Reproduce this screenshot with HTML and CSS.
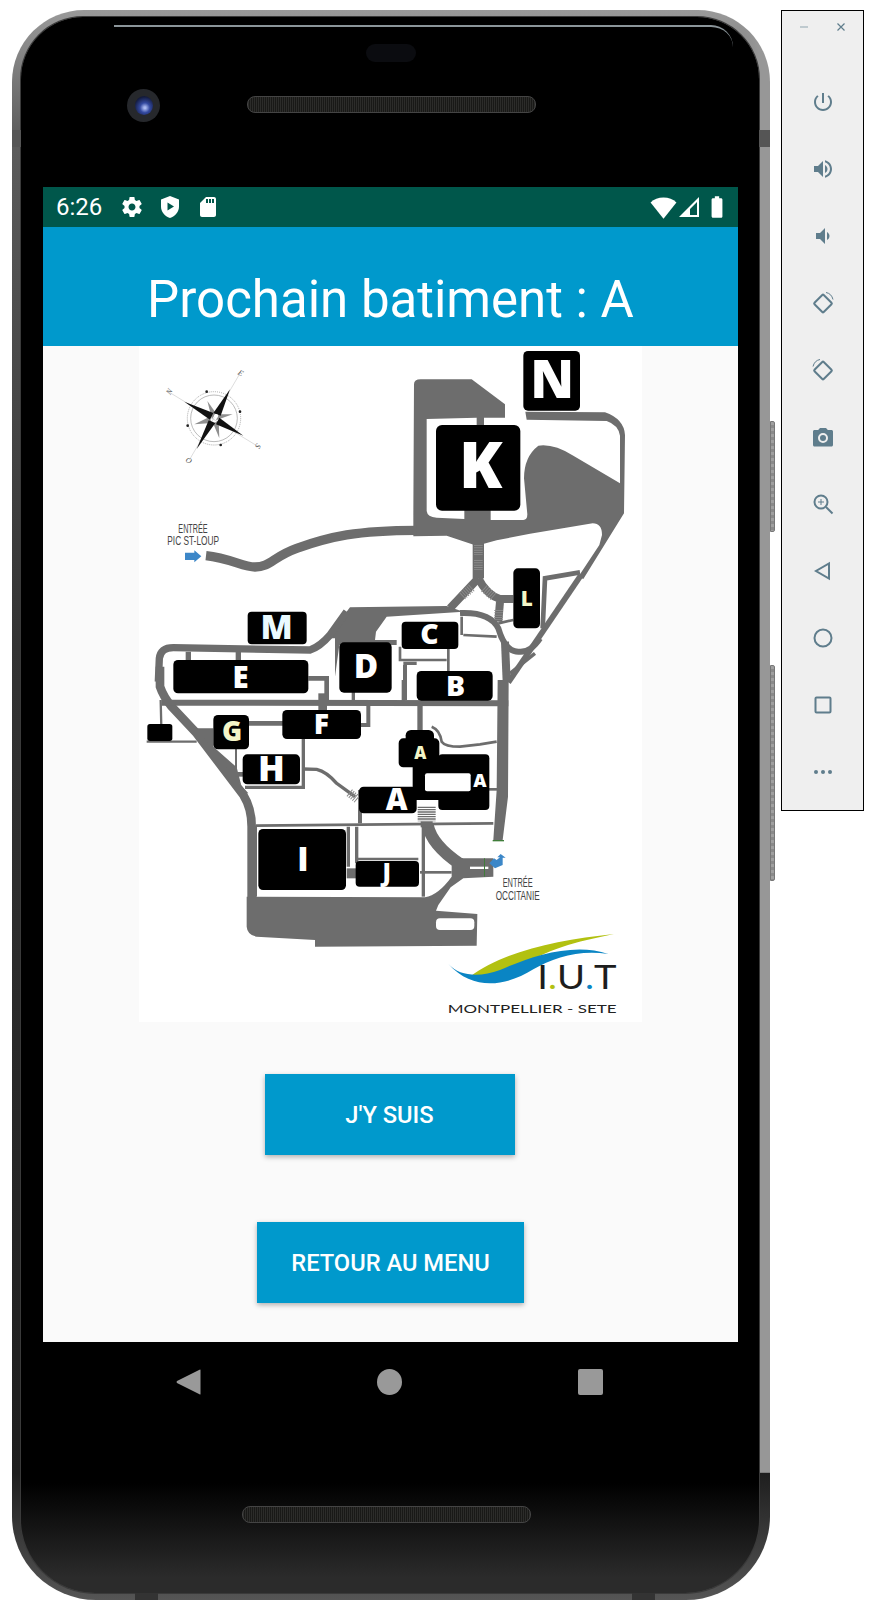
FILE: index.html
```html
<!DOCTYPE html>
<html lang="fr">
<head>
    <meta charset="UTF-8">
    <meta name="viewport" content="width=device-width, initial-scale=1.0">
    <title>Prochain batiment</title>
    <link rel="stylesheet" href="styles.css">
</head>
<body>

<div class="phone">
    <div class="glare"></div>
    <div class="side-btn side-btn-power"></div>
    <div class="side-btn side-btn-volume"></div>
    <div class="band band-left"></div>
    <div class="band band-right"></div>
    <div class="band band-bottom1"></div>
    <div class="band band-bottom2"></div>

    <div class="phone-top">
        <div class="earpiece"></div>
        <div class="top-row">
            <div class="camera"><div class="lens"></div></div>
            <div class="speaker"></div>
        </div>
    </div>

    <div class="screen">
        <div class="statusbar">
            <span class="clock">6:26</span>
            <svg class="st-icon" viewBox="0 0 24 24"><path d="M19.43 12.98c.04-.32.07-.64.07-.98s-.03-.66-.07-.98l2.11-1.65c.19-.15.24-.42.12-.64l-2-3.46c-.12-.22-.39-.3-.61-.22l-2.49 1c-.52-.4-1.08-.73-1.69-.98l-.38-2.65C14.46 2.18 14.25 2 14 2h-4c-.25 0-.46.18-.49.42l-.38 2.65c-.61.25-1.17.59-1.69.98l-2.49-1c-.23-.09-.49 0-.61.22l-2 3.46c-.13.22-.07.49.12.64l2.11 1.65c-.04.32-.07.65-.07.98s.03.66.07.98l-2.11 1.65c-.19.15-.24.42-.12.64l2 3.46c.12.22.39.3.61.22l2.49-1c.52.4 1.08.73 1.69.98l.38 2.65c.03.24.24.42.49.42h4c.25 0 .46-.18.49-.42l.38-2.65c.61-.25 1.17-.59 1.69-.98l2.49 1c.23.09.49 0 .61-.22l2-3.46c.12-.22.07-.49-.12-.64l-2.11-1.65zM12 15.5c-1.93 0-3.5-1.57-3.5-3.5s1.57-3.5 3.5-3.5 3.5 1.57 3.5 3.5-1.57 3.5-3.5 3.5z"/></svg>
            <svg class="st-icon" viewBox="0 0 24 24"><path fill-rule="evenodd" d="M12 1l9 3.500v7c0 5.200-3.700 9.600-9 11.500-5.300-1.900-9-6.300-9-11.500v-7zM9.500 7.500v8l6.500-4z"/></svg>
            <svg class="st-icon" viewBox="0 0 24 24"><path d="M18 2h-8L4.020 8 4 20c0 1.100.9 2 2 2h12c1.100 0 2-.9 2-2V4c0-1.100-.9-2-2-2zm-6 6h-2V4h2v4zm3 0h-2V4h2v4zm3 0h-2V4h2v4z"/></svg>
            <span class="st-gap"></span>
            <svg class="st-icon st-wifi" viewBox="0 0 24 24"><path d="M12 22L.5 7.500C3.500 4.500 7.500 3 12 3s8.500 1.500 11.500 4.500z"/></svg>
            <svg class="st-icon st-signal" viewBox="0 0 24 24"><path fill-rule="evenodd" d="M22 2v20H2zM20 7l-7 7v6h7z"/></svg>
            <svg class="st-icon st-battery" viewBox="0 0 24 24"><path d="M15.700 4H14V2h-4v2H8.300C7.600 4 7 4.600 7 5.300v15.300C7 21.400 7.600 22 8.300 22h7.300c.8 0 1.400-.6 1.400-1.300V5.300C17 4.600 16.400 4 15.700 4z"/></svg>
        </div>

        <div class="appbar">Prochain batiment : A</div>

        <div class="content">
            <svg class="plan" viewBox="27 3 1509 2028">
                <!-- haut du plan -->
                <g>
                    <!-- parking K + grosse zone droite -->
                    <path class="road-fill" d="M852,118 Q852,103 872,103 L1025,103 L1125,178 L1125,218 L1062,218 L1062,240 L1040,240 L1040,218 L890,222 L890,498 Q892,516 920,518 L1003,522 L1003,490 L1082,490 L1082,525 L1180,525 Q1192,525 1192,508 L1182,400 Q1182,335 1225,302 Q1270,295 1330,332 L1470,415 L1470,272 Q1465,240 1430,228 L1190,224 L1186,200 L1425,202 Q1482,222 1485,270 L1482,505 L1360,702 L1345,695 L1408,600 L1416,570 Q1416,535 1388,535 L1200,566 L1100,586 L1040,602 L950,572 L850,574 L850,510 Z"/>
                    <!-- route entree pic st-loup -->
                    <path class="road" stroke-width="28" d="M228,632 C300,640 340,666 375,666 C420,666 430,635 500,610 C600,575 680,556 860,556"/>
                    <!-- route en diagonale -->
                    <path class="road" stroke-width="17" d="M1352,692 L1135,1012"/>
                    <path class="road" stroke-width="14" d="M1238,850 L1245,700 L1350,682"/>
                    <!-- carrefour -->
                    <path class="road" stroke-width="34" d="M1045,590 L1045,700"/>
                    <path class="road" stroke-width="24" d="M1045,700 L960,790"/>
                    <path class="road" stroke-width="24" d="M1045,700 Q1070,750 1110,762 L1150,762"/>
                    <path class="road" stroke-width="24" d="M1110,770 L1105,830"/>
                    <!-- routes haut batiments -->
                    <path class="road-fill" d="M660,787 L950,783 L1000,800 L770,815 L738,860 L735,885 L800,885 L800,900 L628,900 L615,995 L615,880 L590,880 Z"/>
                    <path class="road" stroke-width="18" d="M990,804 Q1080,800 1105,850 Q1125,920 1165,920 Q1200,925 1230,880"/>
                    <path class="road" stroke-width="22" d="M85,1010 L88,940 Q92,908 130,908 L540,915 Q570,905 600,870 L650,800"/>
                    <path class="road" stroke-width="8" d="M1000,870 L1100,875"/>
                    <path class="road" stroke-width="8" d="M995,815 L995,870"/>
                    <path class="road" stroke-width="8" d="M810,905 L810,945 L950,945 M955,905 L955,990"/>
                    <path class="road" stroke-width="8" d="M1105,835 L1150,825"/>
                    <path class="road" stroke-width="24" d="M1125,890 L1130,1010"/>
                    <path class="road" stroke-width="10" d="M1140,985 L1215,925"/>
                    <path class="road" stroke-width="12" d="M825,960 L825,1065"/>
                    <path class="road" stroke-width="10" d="M820,955 L860,955"/>
                    <path class="road" stroke-width="14" d="M535,1000 L590,1000 L590,1065"/>
                    <path class="road" stroke-width="16" d="M175,920 L175,945 M325,920 L325,945"/>
                    <!-- passages pietons -->
                    <line class="stripes" x1="1045" y1="600" x2="1045" y2="630"/>
                    <line class="stripes" x1="1045" y1="645" x2="1045" y2="675"/>
                    <line class="stripes" x1="1025" y1="728" x2="995" y2="755"/>
                    <line class="stripes" x1="1062" y1="730" x2="1090" y2="755"/>
                    <line class="stripes" x1="1106" y1="795" x2="1106" y2="825"/>
                    <!-- batiments -->
                    <rect class="bldg" x="1180" y="18" width="170" height="179" rx="14"/>
                    <rect class="bldg" x="918" y="240" width="253" height="257" rx="18"/>
                    <rect class="bldg" x="1150" y="670" width="80" height="180" rx="14"/>
                    <rect class="bldg" x="353" y="800" width="177" height="98" rx="12"/>
                    <rect class="bldg" x="815" y="830" width="170" height="82" rx="12"/>
                    <text class="letter" x="1267" y="158" font-size="158" text-anchor="middle">N</text>
                    <text class="letter" x="1052" y="430" font-size="190" text-anchor="middle">K</text>
                    <text class="letter letter-yellow" x="1190" y="783" font-size="62" text-anchor="middle">L</text>
                    <text class="letter letter-blue" x="440" y="883" font-size="100" text-anchor="middle">M</text>
                    <text class="letter" x="898" y="897" font-size="85" text-anchor="middle">C</text>

                    <!-- boussole -->
                    <circle class="compass-ring" cx="252" cy="220" r="80"/>
                    <circle class="compass-ring2" cx="252" cy="220" r="70"/>
                    <line class="compass-line" x1="115" y1="140" x2="385" y2="305"/>
                    <line class="compass-line" x1="330" y1="85" x2="178" y2="345"/>
                    <polygon class="compass-soft" points="232,168 258,205 246,222"/>
                    <polygon class="compass-soft" points="308,208 266,208 258,226"/>
                    <polygon class="compass-soft" points="268,280 250,236 266,226"/>
                    <polygon class="compass-soft" points="193,238 238,216 246,234"/>
                    <polygon class="compass-dark" points="300,133 272,212 250,204"/>
                    <polygon class="compass-dark" points="340,272 268,218 258,238"/>
                    <polygon class="compass-dark" points="200,312 236,226 256,234"/>
                    <polygon class="compass-dark" points="163,170 250,204 240,224"/>
                    <circle class="compass-hub" cx="258" cy="213" r="6"/>
                    <circle class="compass-dot" cx="230" cy="140" r="4"/>
                    <circle class="compass-dot" cx="330" cy="200" r="4"/>
                    <circle class="compass-dot" cx="272" cy="300" r="4"/>
                    <circle class="compass-dot" cx="173" cy="242" r="4"/>
                    <text class="compass-letter" x="332" y="92" transform="rotate(30 332 84)" text-anchor="middle">E</text>
                    <text class="compass-letter" x="384" y="311" transform="rotate(120 384 303)" text-anchor="middle">S</text>
                    <text class="compass-letter" x="177" y="355" transform="rotate(210 177 347)" text-anchor="middle">O</text>
                    <text class="compass-letter" x="118" y="148" transform="rotate(-60 118 140)" text-anchor="middle">N</text>

                    <text class="entry-label" x="145" y="563" textLength="88" lengthAdjust="spacingAndGlyphs">ENTRÉE</text>
                    <text class="entry-label" x="112" y="601" textLength="155" lengthAdjust="spacingAndGlyphs">PIC ST-LOUP</text>
                    <path class="arrow-blue" d="M165,623 L193,623 L193,616 L214,634 L193,652 L193,645 L165,645 Z"/>
                </g>

                <!-- bas du plan, decale de la hauteur de coupe -->
                <g transform="translate(0 1005)">
                    <!-- parking du bas -->
                    <path class="road-fill" d="M350,650 L350,740 Q352,765 380,770 L555,780 L555,800 L1040,797 L1042,702 L918,692 L925,675 L962,622 L1000,595 L1090,590 L1090,535 L1062,535 L1000,535 L965,530 L965,590 Q925,645 885,652 L375,650 Z"/>
                    <path class="road" stroke-width="36" d="M893,435 Q905,495 990,552"/>
                    <rect class="hole" x="918" y="715" width="115" height="35" rx="12"/>
                    <path class="road" stroke-width="26" d="M90,-40 L90,20 Q100,50 125,80 L200,160 L340,345 Q365,385 365,440 L365,680"/>
                    <path class="road-fill" d="M200,145 L250,145 L250,200 L320,262 L340,340 L355,340 L310,290 Z"/>
                    <path class="road" stroke-width="18" d="M95,68 L1135,70"/>
                    <path class="road-fill" d="M1103,0 L1136,0 L1134,350 L1118,480 L1090,480 L1100,330 Z"/>
                    <path class="road" stroke-width="16" d="M870,70 L870,160"/>
                    <path class="road" stroke-width="12" d="M715,75 L715,135 L690,135"/>
                    <path class="road" stroke-width="10" d="M520,170 L520,322 L345,322"/>
                    <path class="road" stroke-width="14" d="M340,130 L460,130"/>
                    <path class="road" stroke-width="26" d="M578,40 L578,100"/>
                    <path class="road" stroke-width="10" d="M670,35 L670,65 M820,0 L820,65"/>
                    <path class="road" stroke-width="8" d="M905,140 Q930,150 935,185 Q945,200 990,200 L1050,193 L1100,185"/>
                    <path class="road" stroke-width="10" d="M520,267 L560,268 Q590,275 620,310 L675,350"/>
                    <path class="road" stroke-width="12" d="M690,330 L690,430"/>
                    <path class="road" stroke-width="8" d="M378,437 L1090,430"/>
                    <path class="road" stroke-width="10" d="M880,440 L880,650"/>
                    <path class="road" stroke-width="10" d="M680,440 L680,550 M655,440 L655,560"/>
                    <path class="road" stroke-width="7" d="M680,537 L865,537"/>
                    <path class="road" stroke-width="30" d="M650,580 L690,580"/>
                    <path class="road" stroke-width="8" d="M870,577 L965,577"/>
                    <path class="road" stroke-width="6" d="M378,437 L378,650"/>
                    <path class="road" stroke-width="8" d="M1075,328 L1105,328"/>
                    <path class="road" stroke-width="7" d="M92,60 L95,185 M50,185 L200,185"/>
                    <path class="road" stroke-width="6" d="M318,205 L318,265"/>
                    <path class="road" stroke-width="14" d="M315,283 L345,283"/>
                    <line class="stripes-wide" x1="890" y1="380" x2="890" y2="424"/>
                    <path class="road" stroke-width="36" d="M890,424 L890,442"/>
                    <line class="stripes" x1="658" y1="338" x2="682" y2="358"/>
                    <!-- entree occitanie -->
                    <rect class="hole" x="1020" y="560" width="55" height="7"/>
                    <rect class="mark-green" x="1088" y="480" width="34" height="4"/>
                    <rect class="mark-green" x="1062" y="535" width="3" height="55"/>
                    <path class="arrow-blue" d="M1078,550 L1092,535 L1100,540 L1110,532 L1102,532 L1112,522 L1127,533 L1118,533 L1118,555 L1095,565 Z"/>
                    <text class="entry-label" x="1118" y="622" textLength="90" lengthAdjust="spacingAndGlyphs">ENTRÉE</text>
                    <text class="entry-label" x="1097" y="660" textLength="132" lengthAdjust="spacingAndGlyphs">OCCITANIE</text>

                    <!-- batiments -->
                    <rect class="bldg" x="130" y="-60" width="405" height="100" rx="14"/>
                    <rect class="bldg" x="628" y="-113" width="157" height="151" rx="14"/>
                    <rect class="bldg" x="860" y="-27" width="228" height="89" rx="14"/>
                    <rect class="bldg" x="457" y="90" width="236" height="87" rx="14"/>
                    <rect class="bldg" x="250" y="105" width="107" height="103" rx="14"/>
                    <rect class="bldg" x="338" y="223" width="172" height="90" rx="14"/>
                    <rect class="bldg" x="52" y="132" width="75" height="51" rx="8"/>
                    <rect class="bldg" x="385" y="447" width="263" height="183" rx="14"/>
                    <rect class="bldg" x="677" y="543" width="190" height="77" rx="12"/>
                    <rect class="bldg" x="827" y="150" width="85" height="60" rx="16"/>
                    <rect class="bldg" x="806" y="175" width="122" height="87" rx="14"/>
                    <rect class="bldg" x="925" y="223" width="153" height="167" rx="12"/>
                    <rect class="bldg" x="848" y="240" width="90" height="120"/>
                    <rect class="bldg" x="687" y="320" width="173" height="80" rx="14"/>
                    <rect class="hole" x="885" y="280" width="137" height="54" rx="6"/>

                    <text class="letter" x="332" y="25" font-size="88" text-anchor="middle">E</text>
                    <text class="letter" x="708" y="-5" font-size="100" text-anchor="middle">D</text>
                    <text class="letter" x="977" y="49" font-size="85" text-anchor="middle">B</text>
                    <text class="letter" x="574" y="162" font-size="85" text-anchor="middle">F</text>
                    <text class="letter letter-yellow" x="306" y="183" font-size="82" text-anchor="middle">G</text>
                    <text class="letter" x="424" y="303" font-size="105" text-anchor="middle">H</text>
                    <text class="letter letter-yellow" x="871" y="238" font-size="50" text-anchor="middle">A</text>
                    <text class="letter" x="1050" y="320" font-size="55" text-anchor="middle">A</text>
                    <text class="letter" x="800" y="390" font-size="90" text-anchor="middle">A</text>
                    <text class="letter" x="519" y="574" font-size="98" text-anchor="middle">I</text>
                    <text class="letter" x="770" y="604" font-size="72" text-anchor="middle">J</text>

                    <!-- logo iut -->
                    <path class="logo-green" d="M1020,890 C1120,815 1280,780 1452,762 C1340,785 1240,810 1180,860 C1120,880 1060,885 1020,890 Z"/>
                    <path class="logo-blue" d="M955,852 C990,890 1050,892 1110,870 C1200,830 1330,785 1435,822 C1350,808 1270,832 1210,868 C1130,918 1030,935 955,852 Z"/>
                    <text class="logo-iut" x="1222" y="927" textLength="238" lengthAdjust="spacingAndGlyphs">I<tspan class="dot-green">.</tspan>U<tspan class="dot-blue">.</tspan>T</text>
                    <text class="logo-sub" x="953" y="998" textLength="507" lengthAdjust="spacingAndGlyphs">MONTPELLIER - SETE</text>
                </g>
            </svg>

            <button class="btn btn-here">J'y suis</button>
            <button class="btn btn-menu">Retour au menu</button>
        </div>
    </div>

    <div class="navbar">
        <svg class="nav-icon" viewBox="0 0 25 26"><path d="M24.500 1v24q0 1-1 .3L1 14q-1-1 0-2L23.500.7q1-.7 1 .3z"/></svg>
        <svg class="nav-icon" viewBox="0 0 25 26"><ellipse cx="12.500" cy="13" rx="12.500" ry="13"/></svg>
        <svg class="nav-icon" viewBox="0 0 25 26"><rect width="25" height="26" rx="2"/></svg>
    </div>

    <div class="phone-bottom"><div class="speaker speaker-low"></div></div>
</div>

<div class="panel">
    <div class="panel-head">
        <svg class="head-icon head-min" viewBox="0 0 10 10"><path d="M1 5h8"/></svg>
        <svg class="head-icon" viewBox="0 0 10 10"><path d="M1.500 1.500l7 7M8.500 1.500l-7 7"/></svg>
    </div>
    <div class="tool"><svg viewBox="0 0 24 24"><path d="M13 3h-2v10h2V3zm4.830 2.170l-1.420 1.420C17.990 7.860 19 9.810 19 12c0 3.870-3.130 7-7 7s-7-3.130-7-7c0-2.190 1.010-4.140 2.580-5.420L6.170 5.170C4.230 6.820 3 9.260 3 12c0 4.970 4.030 9 9 9s9-4.030 9-9c0-2.740-1.230-5.180-3.170-6.830z"/></svg></div>
    <div class="tool"><svg viewBox="0 0 24 24"><path d="M3 9v6h4l5 5V4L7 9H3zm13.500 3c0-1.770-1.020-3.290-2.500-4.030v8.050c1.480-.73 2.500-2.250 2.500-4.020zM14 3.230v2.060c2.890.86 5 3.540 5 6.710s-2.110 5.850-5 6.710v2.060c4.010-.91 7-4.490 7-8.770s-2.990-7.860-7-8.770z"/></svg></div>
    <div class="tool"><svg viewBox="0 0 24 24"><path d="M18.500 12c0-1.770-1.020-3.290-2.500-4.030v8.050c1.480-.73 2.500-2.250 2.500-4.020zM5 9v6h4l5 5V4L9 9H5z"/></svg></div>
    <div class="tool"><svg class="line-icon" viewBox="0 0 24 24"><rect x="5.500" y="6" width="13" height="13" rx="1" transform="rotate(45 12 12.500)"/><path class="thin" d="M15 1.500q5.500 1 7 7"/></svg></div>
    <div class="tool"><svg class="line-icon" viewBox="0 0 24 24"><rect x="5.500" y="6" width="13" height="13" rx="1" transform="rotate(-45 12 12.500)"/><path class="thin" d="M9 1.500q-5.500 1-7 7"/></svg></div>
    <div class="tool"><svg viewBox="0 0 24 24"><path fill-rule="evenodd" d="M9 3L7.170 5H3.500C2.700 5 2 5.700 2 6.500V20c0 .8.7 1.500 1.500 1.500h17c.8 0 1.500-.7 1.500-1.500V6.500C22 5.700 21.300 5 20.500 5h-3.670L15 3H9zm3 15a5 5 0 1 1 0-10 5 5 0 0 1 0 10z"/><circle cx="12" cy="13" r="3"/></svg></div>
    <div class="tool"><svg class="line-icon" viewBox="0 0 24 24"><circle cx="10" cy="10" r="6.500"/><path d="M15 15l6.500 6.500"/><path class="thin" d="M10 7v6M7 10h6"/></svg></div>
    <div class="tool"><svg class="line-icon" viewBox="0 0 24 24"><path d="M18 4.500v15L5 12z"/></svg></div>
    <div class="tool"><svg class="line-icon" viewBox="0 0 24 24"><circle cx="12" cy="12" r="8.500"/></svg></div>
    <div class="tool"><svg class="line-icon" viewBox="0 0 24 24"><rect x="4.500" y="4.500" width="15" height="15" rx="1"/></svg></div>
    <div class="tool"><svg viewBox="0 0 24 24"><circle cx="5" cy="12" r="2"/><circle cx="12" cy="12" r="2"/><circle cx="19" cy="12" r="2"/></svg></div>
</div>

</body>
</html>
```

FILE: styles.css
```css
html, body {
    margin: 0;
    padding: 0;
    background: #fff;
}
body {
    display: flex;
    align-items: flex-start;
    width: 873px;
    height: 1611px;
    padding: 10px 0 0 12px;
    box-sizing: border-box;
    overflow: hidden;
    font-family: Roboto, "Liberation Sans", sans-serif;
}

/* telephone */
.phone {
    position: relative;
    isolation: isolate;
    width: 758px;
    height: 1590px;
    padding: 0 32px 0 31px;
    box-sizing: border-box;
    background:
        linear-gradient(90deg, rgba(150, 150, 150, 0) 96%, #979797 98.500%) 0 0 / 100% 92% no-repeat,
        linear-gradient(#9a9a9a, #5c5c5c 8%, #333 40%, #1e1e1e 92%, #555 100%);
    border-radius: 72px 72px 84px 84px;
    flex-shrink: 0;
}
.phone::before {
    content: "";
    position: absolute;
    z-index: -1;
    top: 7px;
    left: 9px;
    right: 11px;
    bottom: 7px;
    border-radius: 62px 62px 74px 74px;
    background: linear-gradient(#000 93%, #2b2b2b 99%);
    box-shadow: 0 0 0 1px #3a3a3a;
}
.glare {
    position: absolute;
    top: 15px;
    left: 102px;
    right: 37px;
    height: 20px;
    border-top: 2px solid #8b959a;
    border-top-right-radius: 36px;
}
.side-btn {
    position: absolute;
    left: 758px;
    width: 5px;
    background: repeating-linear-gradient(#a0a0a0 0 3px, #8a8a8a 3px 6px);
    border: 1px solid #777;
    box-sizing: border-box;
    border-radius: 0 2px 2px 0;
}
.side-btn-power {
    top: 411px;
    height: 111px;
}
.side-btn-volume {
    top: 655px;
    height: 216px;
}
.band {
    position: absolute;
    background: #555;
}
.band-left {
    top: 120px;
    left: 0;
    width: 9px;
    height: 17px;
}
.band-right {
    top: 120px;
    right: 0;
    width: 11px;
    height: 17px;
}
.band-bottom1 {
    bottom: 0;
    left: 123px;
    width: 23px;
    height: 7px;
    background: #333;
}
.band-bottom2 {
    bottom: 0;
    left: 620px;
    width: 23px;
    height: 7px;
    background: #333;
}
.phone-top {
    display: flex;
    flex-direction: column;
    align-items: center;
    height: 177px;
    box-sizing: border-box;
    padding-top: 34px;
}
.earpiece {
    width: 50px;
    height: 18px;
    background: #0b0c10;
    border-radius: 9px;
}
.top-row {
    display: flex;
    align-items: center;
    width: 100%;
    margin-top: 24px;
    padding-left: 84px;
    box-sizing: border-box;
}
.camera {
    display: flex;
    align-items: center;
    justify-content: center;
    width: 33px;
    height: 33px;
    margin-top: 3px;
    background: #26282c;
    border-radius: 50%;
    margin-right: 87px;
}
.lens {
    width: 18px;
    height: 19px;
    border-radius: 50%;
    background: radial-gradient(circle at 55% 62%, #a9b8f0 6%, #3349a0 32%, #141c40 70%, #090b18);
}
.speaker {
    width: 289px;
    height: 17px;
    background: repeating-linear-gradient(90deg, #2c2c2a 0 1px, #191917 1px 2px);
    border: 1px solid #444;
    border-radius: 8px;
    box-sizing: border-box;
}
.screen {
    display: flex;
    flex-direction: column;
    height: 1155px;
}
.statusbar {
    display: flex;
    align-items: center;
    height: 40px;
    flex-shrink: 0;
    padding: 0 8px 0 13px;
    box-sizing: border-box;
    background: #00574b;
    color: #fff;
}
.clock {
    font-size: 24px;
    width: 64px;
}
.st-icon {
    width: 24px;
    height: 24px;
    margin-right: 14px;
    fill: #fff;
}
.st-gap {
    flex: 1;
}
.st-wifi {
    width: 27px;
    height: 27px;
    margin-right: 0;
}
.st-signal {
    margin-right: 3px;
}
.st-battery {
    width: 26px;
    height: 26px;
    margin-right: 0;
}
.appbar {
    display: flex;
    align-items: center;
    justify-content: center;
    height: 119px;
    padding-top: 26px;
    box-sizing: border-box;
    flex-shrink: 0;
    background: #0099cc;
    color: #fff;
    font-size: 51px;
}
.content {
    display: flex;
    flex-direction: column;
    align-items: center;
    flex: 1;
    background: #fafafa;
}
.plan {
    display: block;
    width: 503px;
    height: 676px;
    overflow: visible;
    background: #fff;
    flex-shrink: 0;
}
.btn {
    border: none;
    padding: 0;
    background: #0099cc;
    color: #fff;
    font-family: Roboto, "Liberation Sans", sans-serif;
    font-weight: 500;
    font-size: 23.700px;
    text-transform: uppercase;
    height: 81px;
    box-shadow: 0 2px 5px rgba(0, 0, 0, 0.3);
}
.btn-here {
    width: 250px;
    margin: 52px 2px 0 0;
}
.btn-menu {
    width: 267px;
    margin-top: 67px;
}
.navbar {
    display: flex;
    justify-content: space-between;
    padding: 27px 135px 0 133px;
}
.nav-icon {
    width: 25px;
    height: 26px;
    fill: #999;
}
.phone-bottom {
    display: flex;
    justify-content: center;
    padding-top: 111px;
    margin-left: -8px;
}

/* plan */
.road {
    fill: none;
    stroke: #6d6d6d;
}
.road-fill {
    fill: #6d6d6d;
}
.hole {
    fill: #fff;
}
.bldg {
    fill: #000;
}
.stripes {
    stroke: #8a8a8a;
    stroke-width: 26;
    stroke-dasharray: 3 4;
}
.stripes-wide {
    stroke: #6d6d6d;
    stroke-width: 54;
    stroke-dasharray: 4 3;
}
.letter {
    fill: #fff;
    font-family: "Open Sans", sans-serif;
    font-weight: 800;
}
.letter-yellow {
    fill: #f4f6c8;
}
.letter-blue {
    fill: #eafaff;
}
.compass-ring {
    fill: none;
    stroke: #aaa;
    stroke-width: 3;
    stroke-dasharray: 3 3;
}
.compass-ring2 {
    fill: none;
    stroke: #999;
    stroke-width: 2;
}
.compass-line {
    stroke: #bbb;
    stroke-width: 1.500;
}
.compass-soft {
    fill: #8f8f8f;
}
.compass-dark {
    fill: #111;
}
.compass-hub {
    fill: #fff;
}
.compass-dot {
    fill: #222;
}
.compass-letter {
    fill: #555;
    font-family: "Liberation Serif", serif;
    font-size: 24px;
    font-style: italic;
}
.entry-label {
    fill: #444;
    font-family: "Liberation Sans", sans-serif;
    font-size: 36px;
}
.arrow-blue {
    fill: #3c87c8;
}
.mark-green {
    fill: #3f7d3a;
}
.logo-green {
    fill: #b2c110;
}
.logo-blue {
    fill: #0a85c4;
}
.logo-iut {
    fill: #1d1d1d;
    font-family: Lato, sans-serif;
    font-weight: 400;
    font-size: 98px;
}
.dot-green {
    fill: #b2c110;
}
.dot-blue {
    fill: #0a85c4;
}
.logo-sub {
    fill: #222;
    font-family: Lato, sans-serif;
    font-weight: 400;
    font-size: 34px;
}

/* panneau emulateur */
.panel {
    width: 83px;
    height: 801px;
    margin-left: 11px;
    background: #efefef;
    border: 1px solid #000;
    box-sizing: border-box;
    flex-shrink: 0;
}
.panel-head {
    display: flex;
    justify-content: space-between;
    align-items: center;
    height: 57px;
    padding: 0 17px 26px 17px;
    box-sizing: border-box;
}
.head-icon {
    width: 10px;
    height: 10px;
    fill: none;
    stroke: #5f7d8c;
    stroke-width: 1.200;
}
.head-min {
    stroke: #9fb1ba;
}
.tool {
    display: flex;
    align-items: center;
    justify-content: center;
    height: 67px;
}
.tool svg {
    width: 24px;
    height: 24px;
    fill: #5f7d8c;
}
.tool .line-icon {
    fill: none;
    stroke: #5f7d8c;
    stroke-width: 2;
}
.tool .thin {
    stroke-width: 1;
}
```
